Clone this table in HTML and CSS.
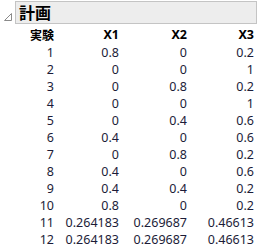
FILE: index.html
```html
<!DOCTYPE html>
<html>
<head>
<meta charset="utf-8">
<link rel="stylesheet" href="styles.css">
</head>
<body>
<div class="outline">
  <svg class="tri" width="10" height="10" viewBox="0 0 10 10"><path d="M8.5 1.5 L8.5 8.5 L1.5 8.5 Z" fill="none" stroke="#8a8a8a" stroke-width="1"/></svg>
  <div class="title">計画</div>
</div>
<div class="table">
  <div class="row head"><span>実験</span><span>X1</span><span>X2</span><span>X3</span></div>
  <div class="row"><span>1</span><span>0.8</span><span>0</span><span>0.2</span></div>
  <div class="row"><span>2</span><span>0</span><span>0</span><span>1</span></div>
  <div class="row"><span>3</span><span>0</span><span>0.8</span><span>0.2</span></div>
  <div class="row"><span>4</span><span>0</span><span>0</span><span>1</span></div>
  <div class="row"><span>5</span><span>0</span><span>0.4</span><span>0.6</span></div>
  <div class="row"><span>6</span><span>0.4</span><span>0</span><span>0.6</span></div>
  <div class="row"><span>7</span><span>0</span><span>0.8</span><span>0.2</span></div>
  <div class="row"><span>8</span><span>0.4</span><span>0</span><span>0.6</span></div>
  <div class="row"><span>9</span><span>0.4</span><span>0.4</span><span>0.2</span></div>
  <div class="row"><span>10</span><span>0.8</span><span>0</span><span>0.2</span></div>
  <div class="row"><span>11</span><span>0.264183</span><span>0.269687</span><span>0.46613</span></div>
  <div class="row"><span>12</span><span>0.264183</span><span>0.269687</span><span>0.46613</span></div>
</div>
</body>
</html>
```
FILE: styles.css
```css
html, body {
  margin: 0;
  padding: 0;
  background: #ffffff;
}
body {
  width: 260px;
  height: 250px;
  overflow: hidden;
  font-family: "Noto Sans", "Noto Sans CJK JP", sans-serif;
}
.outline {
  display: flex;
  align-items: center;
  padding-top: 1px;
}
.tri {
  width: 10px;
  height: 10px;
  margin-left: 3px;
  margin-right: 2px;
  margin-top: 8px;
}
.title {
  width: 237px;
  height: 21px;
  background: #ededed;
  border: 1px solid #c4c4c4;
  font-family: "Noto Sans CJK JP", sans-serif;
  font-weight: bold;
  font-size: 16px;
  line-height: 21px;
  padding-left: 3px;
  color: #000;
}
.table {
  display: flex;
  flex-direction: column;
  padding-top: 2px;
}
.row {
  display: grid;
  grid-template-columns: 54px 65px 68px 67px;
  height: 17px;
  line-height: 17px;
  font-size: 12.5px;
  color: #1c1c38;
}
.row span {
  text-align: right;
}
.row.head {
  font-weight: bold;
  color: #000;
  height: 18px;
  line-height: 18px;
}
.row.head span:first-child {
  font-family: "Noto Sans CJK JP", sans-serif;
  font-size: 12px;
}
```
